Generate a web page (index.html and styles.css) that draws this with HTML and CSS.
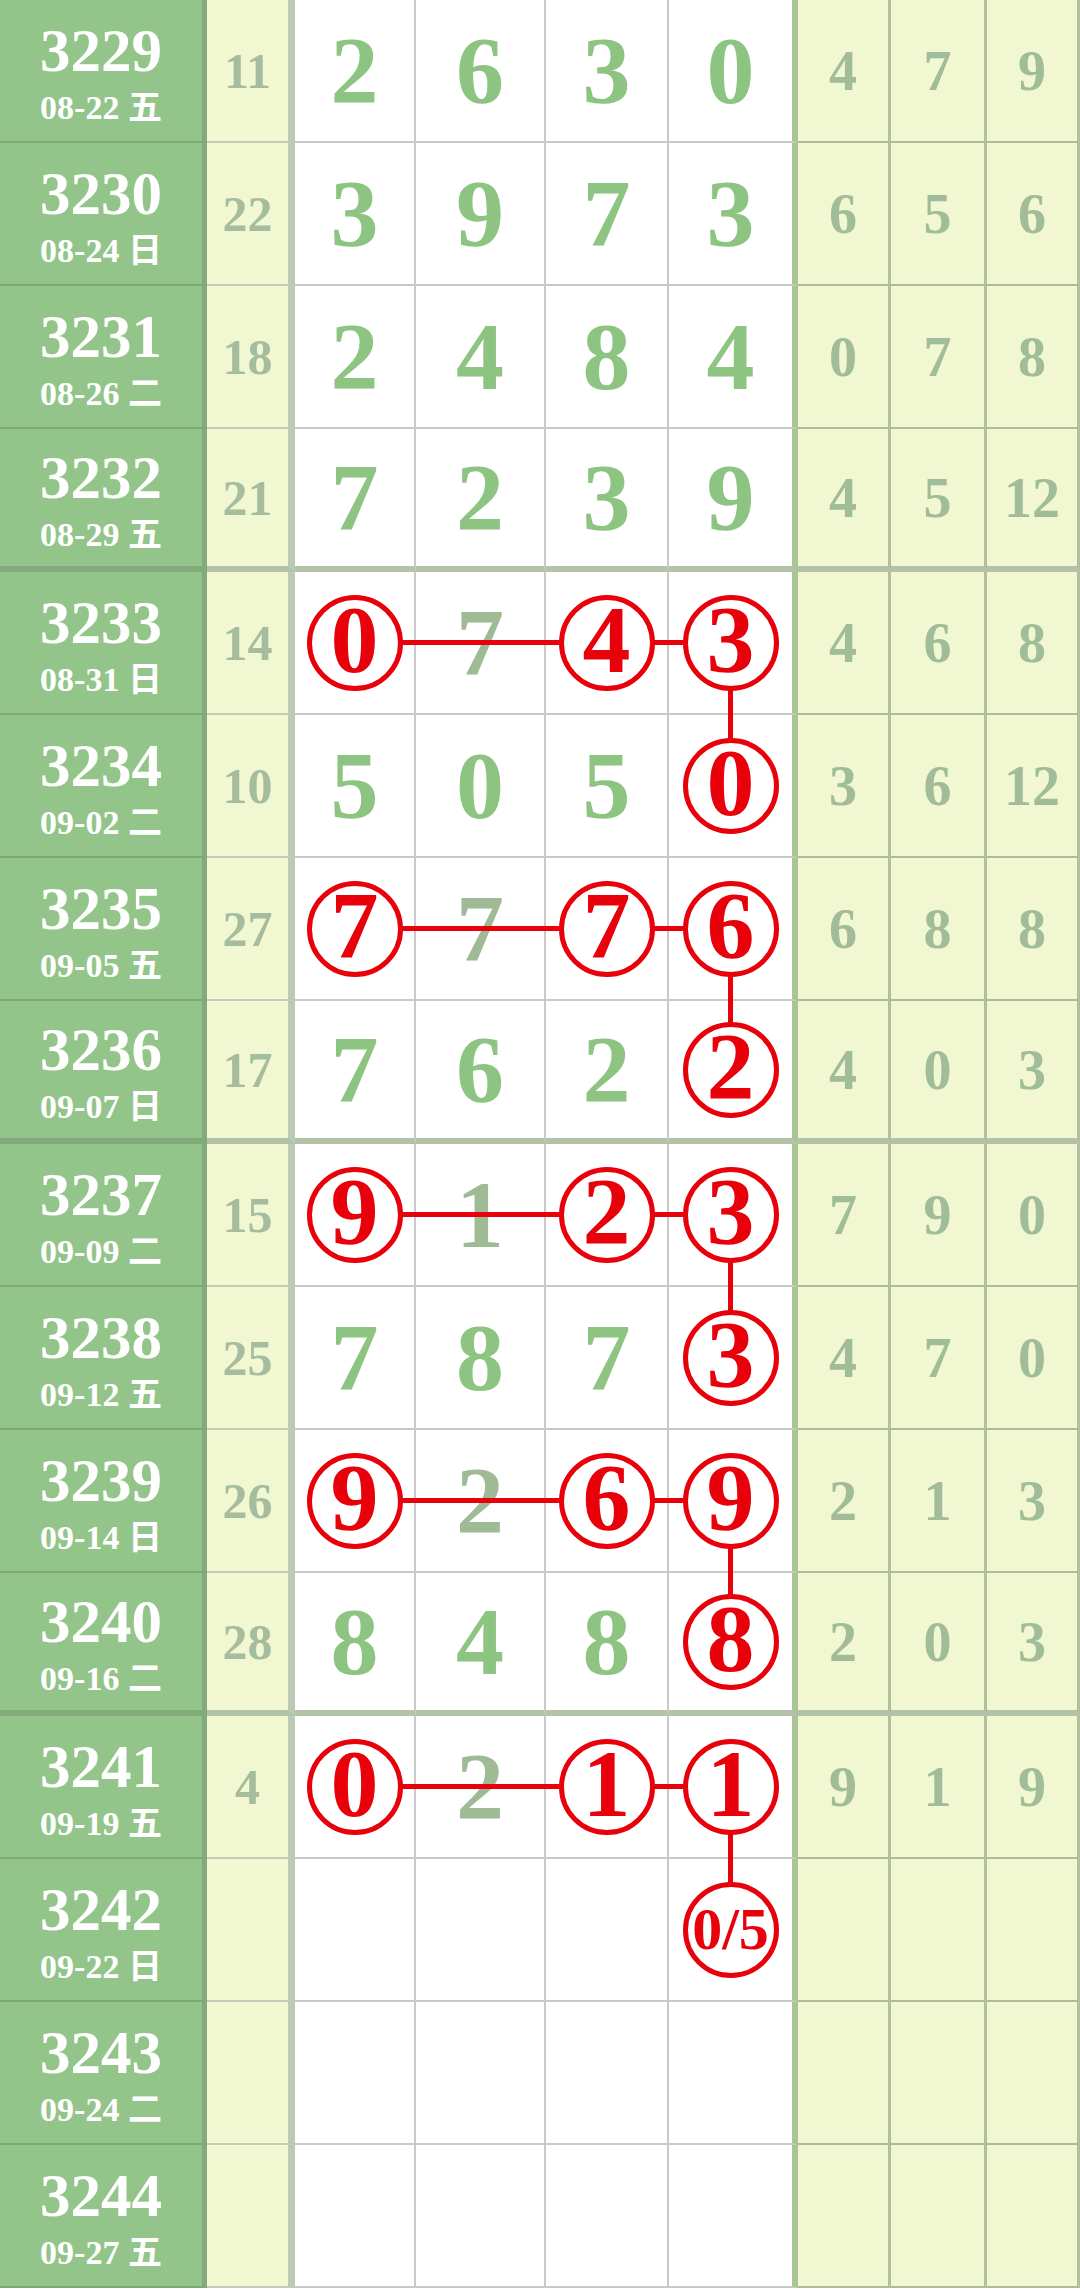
FILE: index.html
```html
<!DOCTYPE html>
<html lang="zh">
<head>
  <meta charset="UTF-8">
  <title>走势图</title>
  <link rel="stylesheet" href="styles.css">
</head>
<body>
  <div class="chart">
    <div class="row">
      <div class="issue"><span class="no">3229</span><span class="date">08-22 五</span></div>
      <div class="sum">11</div>
      <div class="cell">2</div><div class="cell">6</div><div class="cell">3</div><div class="cell last">0</div>
      <div class="tail">4</div><div class="tail">7</div><div class="tail">9</div>
    </div>
    <div class="row">
      <div class="issue"><span class="no">3230</span><span class="date">08-24 日</span></div>
      <div class="sum">22</div>
      <div class="cell">3</div><div class="cell">9</div><div class="cell">7</div><div class="cell last">3</div>
      <div class="tail">6</div><div class="tail">5</div><div class="tail">6</div>
    </div>
    <div class="row">
      <div class="issue"><span class="no">3231</span><span class="date">08-26 二</span></div>
      <div class="sum">18</div>
      <div class="cell">2</div><div class="cell">4</div><div class="cell">8</div><div class="cell last">4</div>
      <div class="tail">0</div><div class="tail">7</div><div class="tail">8</div>
    </div>
    <div class="row sep">
      <div class="issue"><span class="no">3232</span><span class="date">08-29 五</span></div>
      <div class="sum">21</div>
      <div class="cell">7</div><div class="cell">2</div><div class="cell">3</div><div class="cell last">9</div>
      <div class="tail">4</div><div class="tail">5</div><div class="tail">12</div>
    </div>

    <div class="row link">
      <div class="issue"><span class="no">3233</span><span class="date">08-31 日</span></div>
      <div class="sum">14</div>
      <div class="cell"><span class="ball">0</span></div><div class="cell dim">7</div><div class="cell"><span class="ball">4</span></div><div class="cell last down"><span class="ball">3</span></div>
      <div class="tail">4</div><div class="tail">6</div><div class="tail">8</div>
    </div>
    <div class="row">
      <div class="issue"><span class="no">3234</span><span class="date">09-02 二</span></div>
      <div class="sum">10</div>
      <div class="cell">5</div><div class="cell">0</div><div class="cell">5</div><div class="cell last up"><span class="ball">0</span></div>
      <div class="tail">3</div><div class="tail">6</div><div class="tail">12</div>
    </div>
    <div class="row link">
      <div class="issue"><span class="no">3235</span><span class="date">09-05 五</span></div>
      <div class="sum">27</div>
      <div class="cell"><span class="ball">7</span></div><div class="cell dim">7</div><div class="cell"><span class="ball">7</span></div><div class="cell last down"><span class="ball">6</span></div>
      <div class="tail">6</div><div class="tail">8</div><div class="tail">8</div>
    </div>
    <div class="row sep">
      <div class="issue"><span class="no">3236</span><span class="date">09-07 日</span></div>
      <div class="sum">17</div>
      <div class="cell">7</div><div class="cell">6</div><div class="cell">2</div><div class="cell last up"><span class="ball">2</span></div>
      <div class="tail">4</div><div class="tail">0</div><div class="tail">3</div>
    </div>

    <div class="row link">
      <div class="issue"><span class="no">3237</span><span class="date">09-09 二</span></div>
      <div class="sum">15</div>
      <div class="cell"><span class="ball">9</span></div><div class="cell dim">1</div><div class="cell"><span class="ball">2</span></div><div class="cell last down"><span class="ball">3</span></div>
      <div class="tail">7</div><div class="tail">9</div><div class="tail">0</div>
    </div>
    <div class="row">
      <div class="issue"><span class="no">3238</span><span class="date">09-12 五</span></div>
      <div class="sum">25</div>
      <div class="cell">7</div><div class="cell">8</div><div class="cell">7</div><div class="cell last up"><span class="ball">3</span></div>
      <div class="tail">4</div><div class="tail">7</div><div class="tail">0</div>
    </div>
    <div class="row link">
      <div class="issue"><span class="no">3239</span><span class="date">09-14 日</span></div>
      <div class="sum">26</div>
      <div class="cell"><span class="ball">9</span></div><div class="cell dim">2</div><div class="cell"><span class="ball">6</span></div><div class="cell last down"><span class="ball">9</span></div>
      <div class="tail">2</div><div class="tail">1</div><div class="tail">3</div>
    </div>
    <div class="row sep">
      <div class="issue"><span class="no">3240</span><span class="date">09-16 二</span></div>
      <div class="sum">28</div>
      <div class="cell">8</div><div class="cell">4</div><div class="cell">8</div><div class="cell last up"><span class="ball">8</span></div>
      <div class="tail">2</div><div class="tail">0</div><div class="tail">3</div>
    </div>

    <div class="row link">
      <div class="issue"><span class="no">3241</span><span class="date">09-19 五</span></div>
      <div class="sum">4</div>
      <div class="cell"><span class="ball">0</span></div><div class="cell dim">2</div><div class="cell"><span class="ball">1</span></div><div class="cell last down"><span class="ball">1</span></div>
      <div class="tail">9</div><div class="tail">1</div><div class="tail">9</div>
    </div>
    <div class="row">
      <div class="issue"><span class="no">3242</span><span class="date">09-22 日</span></div>
      <div class="sum"></div>
      <div class="cell"></div><div class="cell"></div><div class="cell"></div><div class="cell last up"><span class="ball small">0/5</span></div>
      <div class="tail"></div><div class="tail"></div><div class="tail"></div>
    </div>
    <div class="row">
      <div class="issue"><span class="no">3243</span><span class="date">09-24 二</span></div>
      <div class="sum"></div>
      <div class="cell"></div><div class="cell"></div><div class="cell"></div><div class="cell last"></div>
      <div class="tail"></div><div class="tail"></div><div class="tail"></div>
    </div>
    <div class="row">
      <div class="issue"><span class="no">3244</span><span class="date">09-27 五</span></div>
      <div class="sum"></div>
      <div class="cell"></div><div class="cell"></div><div class="cell"></div><div class="cell last"></div>
      <div class="tail"></div><div class="tail"></div><div class="tail"></div>
    </div>
  </div>
</body>
</html>
```

FILE: styles.css
```css
body {
  margin: 0;
  background: #fff;
  font-family: "Liberation Serif", "Noto Sans CJK SC", serif;
}
.chart {
  width: 1080px;
}
.row {
  display: grid;
  grid-template-columns: 207px 88px 121px 130px 123px 129px 93px 96px 93px;
  height: 143px;
  position: relative;
}
.row > div {
  box-sizing: border-box;
  display: flex;
  align-items: center;
  justify-content: center;
  border-bottom: 2px solid #c9c9c9;
}
.issue {
  flex-direction: column;
  background: #93c58a;
  border-right: 5px solid #84aa7b;
  border-bottom-color: #80a877 !important;
  color: #fff;
  font-weight: bold;
  padding-top: 4px;
}
.issue .no {
  font-size: 61px;
  line-height: 61px;
}
.issue .date {
  font-size: 34px;
  line-height: 34px;
  margin-top: 10px;
}
.sum {
  background: #f1f7d1;
  border-right: 7px solid #bccab4;
  border-bottom-color: #c3cbb6 !important;
  color: #a6bc9e;
  font-size: 50px;
  font-weight: bold;
}
.cell {
  position: relative;
  background: #fff;
  border-right: 2px solid #c9c9c9;
  color: #8dc482;
  font-size: 96px;
  font-weight: bold;
}
.cell.last {
  border-right: 6px solid #a9c596;
}
.cell.dim {
  color: #9fbb95;
}
.tail {
  background: #f1f7d1;
  border-right: 3px solid #b0bf9e;
  border-bottom-color: #abbb9b !important;
  color: #a0bc98;
  font-size: 56px;
  font-weight: bold;
}
.row.sep > div {
  border-bottom: 6px solid #b3c3a8 !important;
}
.row.sep > .issue {
  border-bottom-color: #84a97b !important;
}

/* red marks */
.ball {
  position: relative;
  z-index: 2;
  box-sizing: border-box;
  width: 96px;
  height: 96px;
  border: 5px solid #e8000b;
  border-radius: 50%;
  background: #fff;
  color: #e8000b;
  display: flex;
  align-items: center;
  justify-content: center;
  font-size: 96px;
  line-height: 1;
  padding-bottom: 6px;
}
.ball.small {
  font-size: 60px;
  padding-bottom: 2px;
}
.row.link::after {
  content: "";
  position: absolute;
  left: 355px;
  width: 376px;
  top: 68px;
  height: 5px;
  background: #e8000b;
  z-index: 1;
}
.cell.down::after,
.cell.up::before {
  content: "";
  position: absolute;
  left: calc(50% - 2.5px);
  width: 5px;
  background: #e8000b;
  z-index: 1;
}
.cell.down::after {
  top: 50%;
  bottom: -2px;
}
.cell.up::before {
  top: 0;
  height: 50%;
}
```
